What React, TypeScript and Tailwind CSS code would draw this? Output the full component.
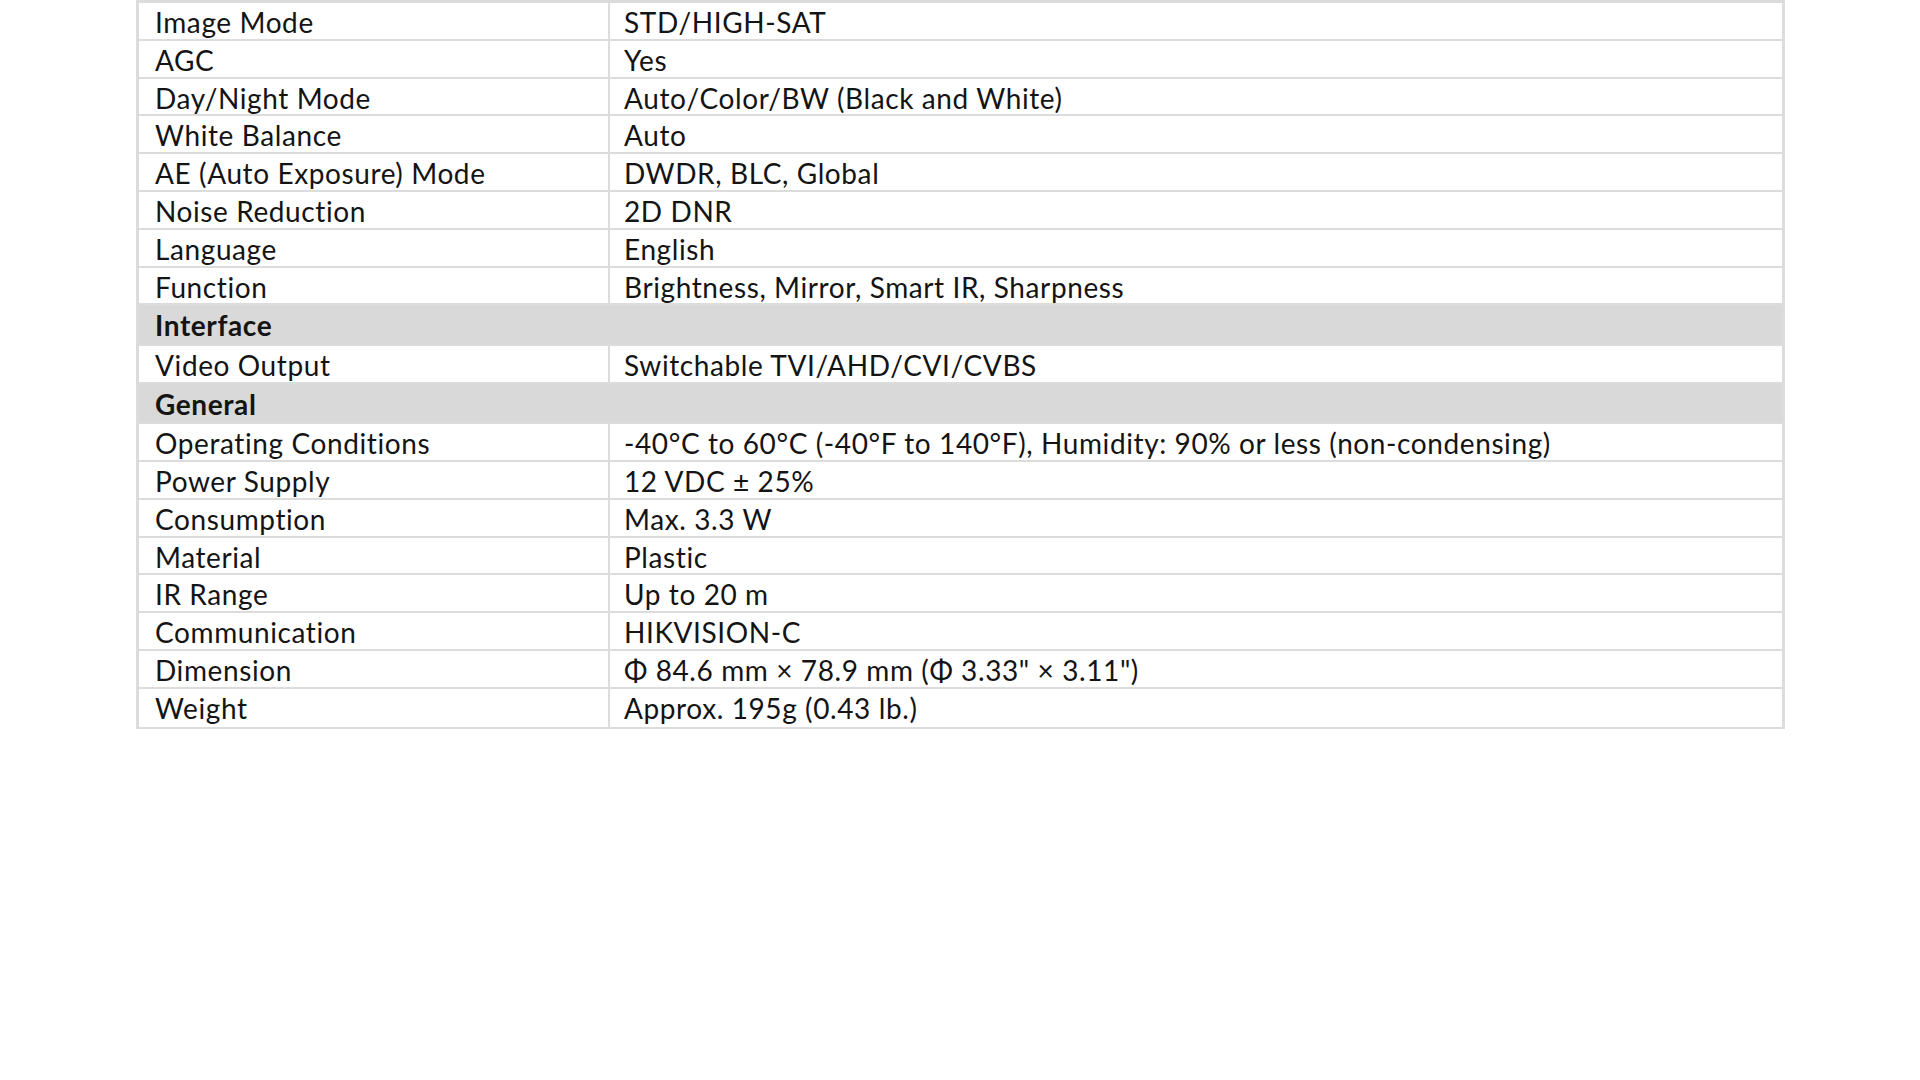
import React from "react";

type Row = { label: string; value?: string; section?: boolean; tall?: boolean };

const ROWS: Row[] = [
  { label: "Image Mode", value: "STD/HIGH-SAT" },
  { label: "AGC", value: "Yes" },
  { label: "Day/Night Mode", value: "Auto/Color/BW (Black and White)" },
  { label: "White Balance", value: "Auto" },
  { label: "AE (Auto Exposure) Mode", value: "DWDR, BLC, Global" },
  { label: "Noise Reduction", value: "2D DNR" },
  { label: "Language", value: "English" },
  { label: "Function", value: "Brightness, Mirror, Smart IR, Sharpness" },
  { label: "Interface", section: true, tall: true },
  { label: "Video Output", value: "Switchable TVI/AHD/CVI/CVBS" },
  { label: "General", section: true },
  {
    label: "Operating Conditions",
    value: "-40°C to 60°C (-40°F to 140°F), Humidity: 90% or less (non-condensing)",
  },
  { label: "Power Supply", value: "12 VDC ± 25%" },
  { label: "Consumption", value: "Max. 3.3 W" },
  { label: "Material", value: "Plastic" },
  { label: "IR Range", value: "Up to 20 m" },
  { label: "Communication", value: "HIKVISION-C" },
  { label: "Dimension", value: "Φ 84.6 mm × 78.9 mm (Φ 3.33\" × 3.11\")" },
  { label: "Weight", value: "Approx. 195g (0.43 lb.)" },
];

export default function App() {
  return (
    <div className="w-[1920px] h-[1080px] bg-white font-['Lato','Open_Sans',sans-serif] text-[#141414] text-[28px] tracking-[0.6px]">
      <div className="ml-[136px] w-[1649px] border-x-[3px] border-t-[3px] border-b-2 border-[#dcdcdc]">
        {ROWS.map((row, i) =>
          row.section ? (
            <div
              key={i}
              className={`${row.tall ? "h-[41px]" : "h-[40px]"} bg-[#d9d9d9] border-b-2 border-[#dcdcdc] pl-[16px] pt-[4px] font-bold leading-[33px]`}
            >
              {row.label}
            </div>
          ) : (
            <div
              key={i}
              className={`flex h-[37.8px] ${i === ROWS.length - 1 ? "" : "border-b-2 border-[#dcdcdc]"}`}
            >
              <div className="w-[471px] shrink-0 border-r-2 border-[#dcdcdc] pl-[16px] pt-[3px] leading-[32px]">
                {row.label}
              </div>
              <div className="flex-1 pl-[14px] pt-[3px] leading-[32px] whitespace-nowrap">
                {row.value}
              </div>
            </div>
          )
        )}
      </div>
    </div>
  );
}
